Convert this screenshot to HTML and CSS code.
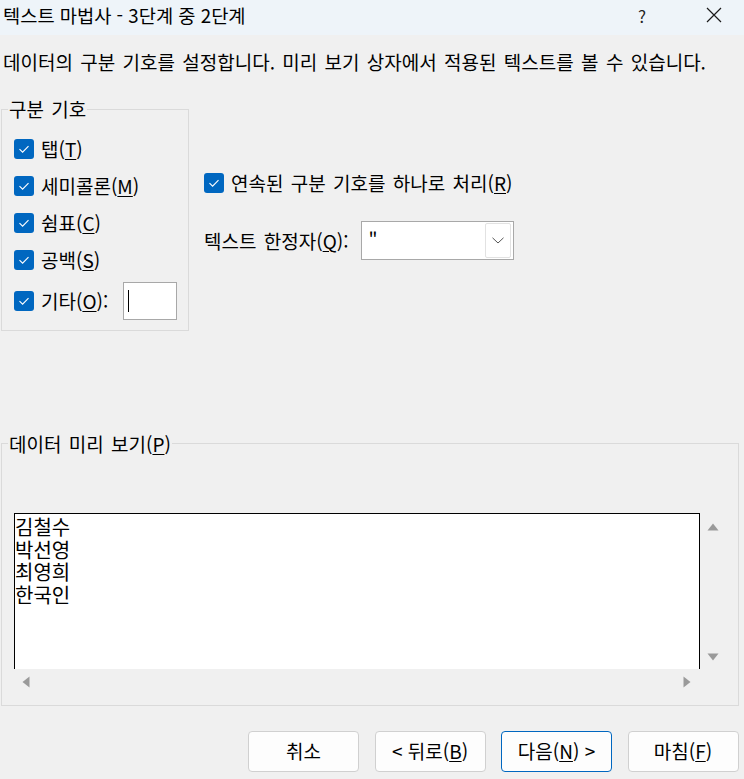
FILE: index.html
```html
<!DOCTYPE html>
<html lang="ko">
<head>
<meta charset="utf-8">
<title>텍스트 마법사 - 3단계 중 2단계</title>
<link rel="stylesheet" href="styles.css">
</head>
<body>
<div class="window">
  <div class="titlebar">
    <span class="title">텍스트 마법사 - 3단계 중 2단계</span>
    <span class="help">?</span>
    <span class="close"><svg width="16" height="16" viewBox="0 0 16 16"><path d="M1 1 L15 15 M15 1 L1 15" stroke="#1a1a1a" stroke-width="1.2" fill="none"/></svg></span>
  </div>
  <p class="desc">데이터의 구분 기호를 설정합니다. 미리 보기 상자에서 적용된 텍스트를 볼 수 있습니다.</p>
  <div class="options">
    <fieldset class="group delims">
      <legend>구분 기호</legend>
      <div class="chk"><span class="box"><svg width="20" height="20" viewBox="0 0 20 20"><path d="M5.5 10.2 L8.6 13.2 L14.5 7.2" stroke="#fff" stroke-width="1.1" fill="none"/></svg></span><span>탭(<u>T</u>)</span></div>
      <div class="chk"><span class="box"><svg width="20" height="20" viewBox="0 0 20 20"><path d="M5.5 10.2 L8.6 13.2 L14.5 7.2" stroke="#fff" stroke-width="1.1" fill="none"/></svg></span><span>세미콜론(<u>M</u>)</span></div>
      <div class="chk"><span class="box"><svg width="20" height="20" viewBox="0 0 20 20"><path d="M5.5 10.2 L8.6 13.2 L14.5 7.2" stroke="#fff" stroke-width="1.1" fill="none"/></svg></span><span>쉼표(<u>C</u>)</span></div>
      <div class="chk"><span class="box"><svg width="20" height="20" viewBox="0 0 20 20"><path d="M5.5 10.2 L8.6 13.2 L14.5 7.2" stroke="#fff" stroke-width="1.1" fill="none"/></svg></span><span>공백(<u>S</u>)</span></div>
      <div class="chk other"><span class="box"><svg width="20" height="20" viewBox="0 0 20 20"><path d="M5.5 10.2 L8.6 13.2 L14.5 7.2" stroke="#fff" stroke-width="1.1" fill="none"/></svg></span><span>기타(<u>O</u>):</span><span class="textbox"><span class="caret"></span></span></div>
    </fieldset>
    <div class="right">
      <div class="chk"><span class="box"><svg width="20" height="20" viewBox="0 0 20 20"><path d="M5.5 10.2 L8.6 13.2 L14.5 7.2" stroke="#fff" stroke-width="1.1" fill="none"/></svg></span><span>연속된 구분 기호를 하나로 처리(<u>R</u>)</span></div>
      <div class="qualifier">
        <span>텍스트 한정자(<u>Q</u>):</span>
        <div class="select">
          <span class="value">"</span>
          <span class="dd"><svg width="12" height="7" viewBox="0 0 12 7"><path d="M0.5 0.8 L6 6 L11.5 0.8" stroke="#555" stroke-width="1" fill="none"/></svg></span>
        </div>
      </div>
    </div>
  </div>
  <fieldset class="group preview">
    <legend>데이터 미리 보기(<u>P</u>)</legend>
    <div class="pv-row">
      <div class="pv-box">
        <div class="pv-line">김철수</div>
        <div class="pv-line">박선영</div>
        <div class="pv-line">최영희</div>
        <div class="pv-line">한국인</div>
      </div>
      <div class="vscroll">
        <svg width="12" height="8" viewBox="0 0 12 8"><path d="M6 0.5 L11.5 7.5 L0.5 7.5 Z" fill="#9a9a9a"/></svg>
        <svg width="12" height="8" viewBox="0 0 12 8"><path d="M0.5 0.5 L11.5 0.5 L6 7.5 Z" fill="#9a9a9a"/></svg>
      </div>
    </div>
    <div class="hscroll">
      <svg width="8" height="12" viewBox="0 0 8 12"><path d="M0.5 6 L7.5 0.5 L7.5 11.5 Z" fill="#9a9a9a"/></svg>
      <svg width="8" height="12" viewBox="0 0 8 12"><path d="M7.5 6 L0.5 0.5 L0.5 11.5 Z" fill="#9a9a9a"/></svg>
    </div>
  </fieldset>
  <div class="buttons">
    <button class="btn">취소</button>
    <button class="btn">&lt; 뒤로(<u>B</u>)</button>
    <button class="btn primary">다음(<u>N</u>) &gt;</button>
    <button class="btn">마침(<u>F</u>)</button>
  </div>
</div>
</body>
</html>
```

FILE: styles.css
```css
* { box-sizing: border-box; }
html, body { margin: 0; padding: 0; }
body {
  background: #f0f0f0;
  font-family: "Noto Sans CJK KR", "Noto Sans", sans-serif;
  font-size: 19px;
  line-height: 24px;
  word-spacing: 2px;
  color: #000;
}
.window {
  width: 744px;
  height: 779px;
  overflow: hidden;
}
u { text-decoration: underline; text-underline-offset: 2px; text-decoration-thickness: 1px; }

.titlebar {
  height: 35px;
  background: #eef4f9;
  display: flex;
  align-items: center;
  padding-left: 3px;
  word-spacing: 0;
}
.title { flex: 1; margin-top: -6px; font-size: 18.7px; }
.help {
  font-size: 17px;
  color: #222;
  width: 20px;
  margin-right: 48px;
  margin-top: -4px;
}
.close {
  width: 16px; height: 16px;
  margin-right: 22px;
  margin-top: -6px;
  display: flex;
}

.desc {
  margin: 15px 0 0 3px;
}

.options {
  display: flex;
  align-items: flex-start;
  margin-top: 23px;
}

.group {
  border: 1px solid #dadada;
  margin: 0;
  min-width: 0;
}
.group legend {
  padding: 0 1px;
  margin-left: -6px;
  line-height: 24px;
}

.delims {
  margin-left: 1px;
  width: 188px;
  padding: 9.5px 0 10px 12px;
}

.chk {
  display: flex;
  align-items: center;
  height: 37px;
  gap: 7px;
  white-space: nowrap;
}
.chk .box {
  width: 20px;
  height: 20px;
  border-radius: 3px;
  background: #0067c0;
  display: flex;
  flex: none;
}
.chk.other {
  height: 38px;
  margin-top: 3px;
}
.textbox {
  width: 54px;
  height: 38px;
  background: #fff;
  border: 1px solid #a8a8a8;
  margin-left: auto;
  margin-right: 11px;
  display: flex;
  align-items: center;
}
.caret {
  width: 1px;
  height: 22px;
  background: #000;
  margin-left: 4px;
}

.right {
  margin-left: 15px;
  margin-top: 67.5px;
}
.qualifier {
  display: flex;
  align-items: center;
  margin-top: 19.5px;
  gap: 13px;
}
.select {
  width: 153px;
  height: 39px;
  background: #fff;
  border: 1px solid #a8a8a8;
  display: flex;
  align-items: stretch;
  padding: 0 2px 1px 6px;
}
.select .value { flex: 1; line-height: 36px; }
.select .dd {
  width: 26px;
  margin-top: 1px;
  border: 1px solid #e2e2e2;
  border-radius: 2px;
  display: flex;
  align-items: center;
  justify-content: center;
}

.preview {
  margin: 101px 0 0 1px;
  width: 738px;
  padding: 57.5px 0 10px 12px;
}
.pv-row {
  display: flex;
}
.pv-box {
  width: 686px;
  height: 156px;
  background: #fff;
  border: 1px solid #000;
  border-bottom: none;
  padding-top: 2px;
  font-size: 20px;
}
.pv-line {
  height: 22.5px;
  line-height: 22.5px;
}
.vscroll {
  width: 26px;
  display: flex;
  flex-direction: column;
  justify-content: space-between;
  align-items: center;
  padding: 10px 0 8px;
}
.hscroll {
  width: 686px;
  height: 26px;
  display: flex;
  align-items: center;
  justify-content: space-between;
  padding: 0 9px 0 8px;
}

.buttons {
  display: flex;
  justify-content: flex-end;
  gap: 15.5px;
  margin-top: 24.5px;
  padding-right: 5.5px;
  word-spacing: 0;
}
.btn {
  width: 111px;
  height: 41.5px;
  background: #fdfdfd;
  border: 1px solid #d0d0d0;
  border-radius: 4px;
  font-family: inherit;
  font-size: 19px;
  color: #000;
  padding: 0;
  line-height: 24px;
}
.btn.primary {
  border-color: #0067c0;
}
```
